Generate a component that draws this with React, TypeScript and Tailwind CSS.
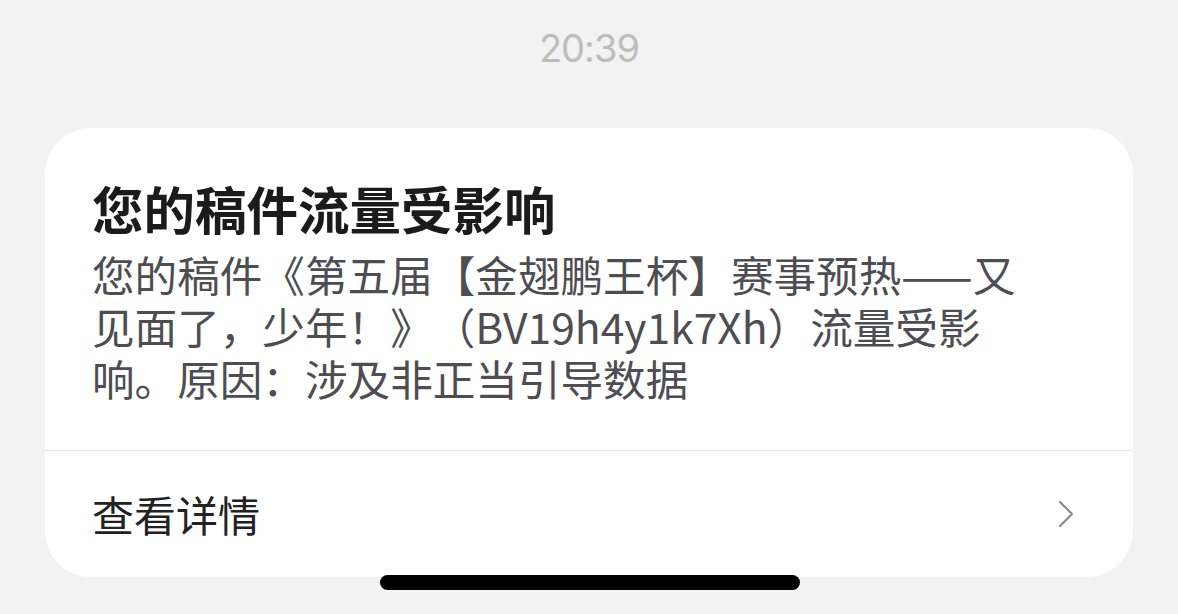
import React from "react";

export default function App() {
  const cjk = { fontFamily: '"Noto Sans CJK SC", "Noto Sans", sans-serif' };
  return (
    <div className="relative w-[1178px] h-[614px] overflow-hidden bg-[#f2f2f2]" style={cjk}>
      <div className="h-[95px] flex items-center justify-center">
        <span
          className="text-[38px] leading-none tracking-[-1px] text-[#bdbdbd]"
          style={{ fontFamily: 'Inter, "Liberation Sans", sans-serif' }}
        >
          20:39
        </span>
      </div>
      <div className="mt-[33px] mx-[45px] w-[1088px] h-[449px] rounded-[46px] bg-white flex flex-col overflow-hidden">
        <div className="px-[47px] pt-[50px] pb-[46px] border-b border-[#e6e6e6]">
          <div className="text-[51.5px] leading-[60px] font-bold text-[#1b1b1b]">
            您的稿件流量受影响
          </div>
          <div className="mt-[10px] text-[42.6px] leading-[52px] text-[#4d4d52] whitespace-nowrap [text-spacing-trim:space-all]">
            <div>您的稿件《第五届【金翅鹏王杯】赛事预热——又</div>
            <div>见面了，少年！》（BV19h4y1k7Xh）流量受影</div>
            <div>响。原因：涉及非正当引导数据</div>
          </div>
        </div>
        <div className="flex-1 flex items-center justify-between pl-[47px] pr-[58px]">
          <span className="text-[42px] leading-none text-[#222222]">查看详情</span>
          <svg width="17" height="28" viewBox="0 0 17 28" fill="none">
            <path d="M2 2 L14 14 L2 26" stroke="#8c8c90" strokeWidth="2.2" strokeLinecap="round" strokeLinejoin="round" />
          </svg>
        </div>
      </div>
      <div className="absolute left-[380px] top-[575px] w-[420px] h-[15px] rounded-full bg-black" />
    </div>
  );
}
